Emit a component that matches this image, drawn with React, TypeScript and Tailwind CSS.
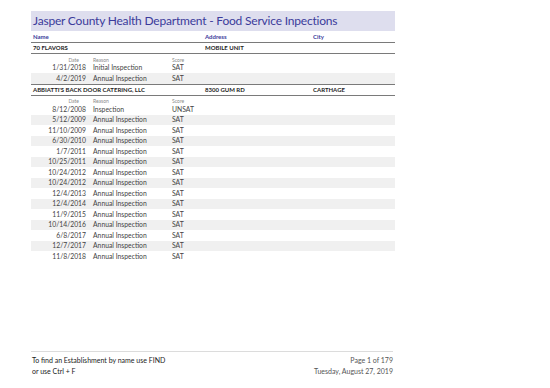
type Inspection = { date: string; reason: string; score: string };
type Establishment = { name: string; address: string; city: string; inspections: Inspection[] };

const establishments: Establishment[] = [
  {
    name: "70 FLAVORS",
    address: "MOBILE UNIT",
    city: "",
    inspections: [
      { date: "1/31/2018", reason: "Initial Inspection", score: "SAT" },
      { date: "4/2/2019", reason: "Annual Inspection", score: "SAT" },
    ],
  },
  {
    name: "ABBIATTI'S BACK DOOR CATERING, LLC",
    address: "8300 GUM RD",
    city: "CARTHAGE",
    inspections: [
      { date: "8/12/2008", reason: "Inspection", score: "UNSAT" },
      { date: "5/12/2009", reason: "Annual Inspection", score: "SAT" },
      { date: "11/10/2009", reason: "Annual Inspection", score: "SAT" },
      { date: "6/30/2010", reason: "Annual Inspection", score: "SAT" },
      { date: "1/7/2011", reason: "Annual Inspection", score: "SAT" },
      { date: "10/25/2011", reason: "Annual Inspection", score: "SAT" },
      { date: "10/24/2012", reason: "Annual Inspection", score: "SAT" },
      { date: "10/24/2012", reason: "Annual Inspection", score: "SAT" },
      { date: "12/4/2013", reason: "Annual Inspection", score: "SAT" },
      { date: "12/4/2014", reason: "Annual Inspection", score: "SAT" },
      { date: "11/9/2015", reason: "Annual Inspection", score: "SAT" },
      { date: "10/14/2016", reason: "Annual Inspection", score: "SAT" },
      { date: "6/8/2017", reason: "Annual Inspection", score: "SAT" },
      { date: "12/7/2017", reason: "Annual Inspection", score: "SAT" },
      { date: "11/8/2018", reason: "Annual Inspection", score: "SAT" },
    ],
  },
];

export default function App() {
  return (
    <div className="flex h-[388px] w-[550px] flex-col bg-white pl-[31px] text-[#222] font-['Lato','Noto_Sans',sans-serif]">
      <div className="w-[364px] pt-[11px]">
        {/* title bar */}
        <div className="flex h-[20px] items-center bg-[#dedeee] pl-[2px] text-[12px] leading-none tracking-[-0.2px] text-[#3b3b9b]">
          Jasper County Health Department - Food Service Inpections
        </div>

        {/* column headers */}
        <div className="flex h-[12px] items-end border-b border-[#7a7a7a] pb-[2px] text-[6px] font-bold leading-none text-[#3b3b9b]">
          <span className="w-[174px] pl-[2px]">Name</span>
          <span className="w-[108px]">Address</span>
          <span>City</span>
        </div>

        {establishments.map((est, i) => (
          <div key={est.name}>
            <div
              className={
                "flex items-center border-b border-[#7a7a7a] text-[6px] font-bold leading-none text-[#1e1e1e] " +
                (i > 0 ? "h-[12px] border-t" : "h-[11px]")
              }
            >
              <span className="w-[174px] pl-[2px]">{est.name}</span>
              <span className="w-[108px]">{est.address}</span>
              <span>{est.city}</span>
            </div>

            <div className="flex h-[8.5px] items-end text-[5px] leading-none text-[#8a8a8a]">
              <span className="w-[48px] text-right">Date</span>
              <span className="w-[14px]" />
              <span className="w-[79px]">Reason</span>
              <span>Score</span>
            </div>

            {est.inspections.map((row, j) => (
              <div
                key={j}
                className={
                  "flex h-[10.5px] items-center text-[6.8px] leading-none text-[#444] " +
                  (j % 2 === 1 ? "bg-[#f0f0f0]" : "")
                }
              >
                <span className="w-[55px] text-right">{row.date}</span>
                <span className="w-[7px]" />
                <span className="w-[79px]">{row.reason}</span>
                <span>{row.score}</span>
              </div>
            ))}
          </div>
        ))}
      </div>

      {/* footer */}
      <div className="mt-auto mb-[11px] flex w-[362px] justify-between border-t border-[#dcdcdc] pt-[3px] text-[7px] leading-[11px]">
        <div className="pl-[1px] text-[#222]">
          <div>To find an Establishment by name use FIND</div>
          <div>or use Ctrl + F</div>
        </div>
        <div className="text-right text-[#555]">
          <div>Page 1 of 179</div>
          <div>Tuesday, August 27, 2019</div>
        </div>
      </div>
    </div>
  );
}
